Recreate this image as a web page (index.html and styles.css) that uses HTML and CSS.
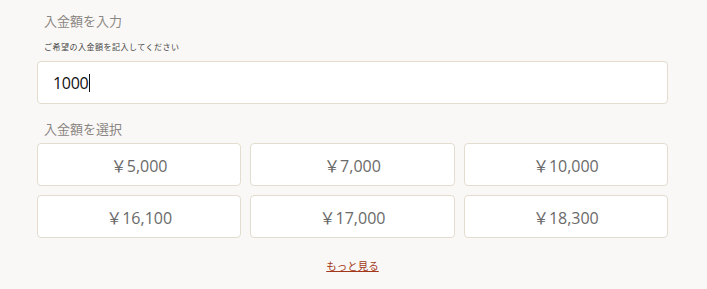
FILE: index.html
```html
<!DOCTYPE html>
<html lang="ja">
<head>
<meta charset="utf-8">
<title>入金額</title>
<link rel="stylesheet" href="styles.css">
</head>
<body>
<div class="deposit">
  <div class="section-title">入金額を入力</div>
  <div class="hint">ご希望の入金額を記入してください</div>
  <div class="input-box"><span class="input-value">1000</span><span class="caret"></span></div>
  <div class="section-title second">入金額を選択</div>
  <div class="amounts">
    <button class="amount">￥5,000</button>
    <button class="amount">￥7,000</button>
    <button class="amount">￥10,000</button>
    <button class="amount">￥16,100</button>
    <button class="amount">￥17,000</button>
    <button class="amount">￥18,300</button>
  </div>
  <div class="more-row"><a class="more" href="#">もっと見る</a></div>
</div>
</body>
</html>
```
FILE: styles.css
```css
html, body {
  margin: 0;
  padding: 0;
  background: #faf8f6;
}
body {
  font-family: "Open Sans", "Noto Sans CJK JP", sans-serif;
  width: 707px;
  height: 289px;
  overflow: hidden;
}
.deposit {
  width: 631px;
  margin-left: 37px;
  padding-top: 11px;
}
.section-title {
  font-family: "Noto Sans CJK JP", sans-serif;
  font-size: 13px;
  line-height: 20px;
  color: #8a8682;
  padding-left: 7px;
}
.section-title.second {
  margin-top: 15px;
}
.hint {
  font-family: "Noto Sans CJK JP", sans-serif;
  font-size: 8px;
  line-height: 12px;
  color: #444;
  padding-left: 7px;
  margin-top: 10px;
  letter-spacing: 0.5px;
}
.input-box {
  margin-top: 8px;
  box-sizing: border-box;
  height: 43px;
  background: #fff;
  border: 1px solid #e3dccf;
  border-radius: 4px;
  display: flex;
  align-items: center;
  padding-left: 15px;
}
.input-value {
  font-size: 16px;
  color: #111;
  letter-spacing: -0.3px;
}
.caret {
  display: inline-block;
  width: 1px;
  height: 18px;
  background: #111;
  margin-left: 1px;
}
.amounts {
  margin-top: 4px;
  display: grid;
  grid-template-columns: repeat(3, 1fr);
  gap: 9px;
}
.amount {
  box-sizing: border-box;
  height: 43px;
  background: #fff;
  border: 1px solid #e3dccf;
  border-radius: 4px;
  font-family: "Open Sans", "Noto Sans CJK JP", sans-serif;
  font-size: 16px;
  color: #6a6a6a;
  padding: 0;
  margin: 0;
}
.more-row {
  margin-top: 18px;
  text-align: center;
  line-height: 16px;
}
.more {
  font-family: "Noto Sans CJK JP", sans-serif;
  font-size: 10.5px;
  color: #a3391c;
  text-decoration: underline;
}
```
